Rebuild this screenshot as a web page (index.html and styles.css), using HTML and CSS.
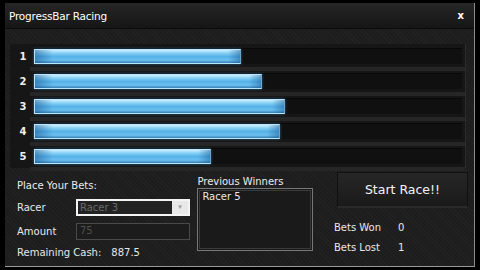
FILE: index.html
```html
<!DOCTYPE html>
<html lang="en">
<head>
    <meta charset="UTF-8">
    <title>ProgressBar Racing</title>
    <link rel="stylesheet" href="styles.css">
</head>
<body>
    <div class="window">
        <div class="titlebar">
            <span class="title">ProgressBar Racing</span>
            <span class="close">x</span>
        </div>

        <div class="content">
            <div class="race">
                <div class="lane"><span class="num">1</span><div class="track"><div class="bar" style="width: 48.4%"></div></div></div>
                <div class="lane"><span class="num">2</span><div class="track"><div class="bar" style="width: 53.3%"></div></div></div>
                <div class="lane"><span class="num">3</span><div class="track"><div class="bar" style="width: 58.6%"></div></div></div>
                <div class="lane"><span class="num">4</span><div class="track"><div class="bar" style="width: 57.5%"></div></div></div>
                <div class="lane"><span class="num">5</span><div class="track"><div class="bar" style="width: 41.4%"></div></div></div>
            </div>

            <div class="bottom">
                <div class="bets">
                    <div class="heading">Place Your Bets:</div>
                    <div class="field">
                        <span class="label">Racer</span>
                        <div class="combo"><span>Racer 3</span><span class="arrow">&#9662;</span></div>
                    </div>
                    <div class="field">
                        <span class="label">Amount</span>
                        <div class="textbox">75</div>
                    </div>
                    <div class="cash"><span>Remaining Cash:</span><span class="cash-val">887.5</span></div>
                </div>

                <div class="winners">
                    <div class="heading">Previous Winners</div>
                    <div class="listbox">Racer 5</div>
                </div>

                <div class="side">
                    <button class="start">Start Race!!</button>
                    <div class="stat"><span class="stat-label">Bets Won</span><span>0</span></div>
                    <div class="stat"><span class="stat-label">Bets Lost</span><span>1</span></div>
                </div>
            </div>
        </div>
    </div>
</body>
</html>
```

FILE: styles.css
```css
* {
    margin: 0;
    padding: 0;
    box-sizing: border-box;
}

body {
    background: #000;
    font-family: 'DejaVu Sans', 'Liberation Sans', sans-serif;
    color: #e8e8e8;
    font-size: 10px;
    width: 480px;
    height: 270px;
    overflow: hidden;
    padding: 3px 5px 3px 5px;
}

.window {
    height: 264px;
    background:
        repeating-linear-gradient(45deg, rgba(255,255,255,0.025) 0 1px, transparent 1px 3px),
        #1d1d1d;
    border-right: 1px solid #8a8a8a;
    border-bottom: 1px solid #9a9a9a;
    display: flex;
    flex-direction: column;
}

.titlebar {
    height: 26px;
    background: linear-gradient(#262626, #161616);
    border-bottom: 1px solid #0c0c0c;
    display: flex;
    justify-content: space-between;
    align-items: center;
    padding: 0 10px 0 4px;
}

.title {
    font-size: 10.5px;
    color: #fff;
    letter-spacing: -0.2px;
}

.close {
    font-size: 10px;
    font-weight: bold;
    color: #fff;
}

.content {
    padding: 15px 8px 0 5px;
}

.race {
    display: flex;
    flex-direction: column;
    gap: 9px;
    background: #161616;
    border-right: 1px solid #2c2c2c;
    padding: 4px 3px 4px 0;
}

.lane {
    display: flex;
    align-items: center;
    height: 16px;
    position: relative;
}

.lane::after {
    content: '';
    position: absolute;
    left: 20px;
    right: -3px;
    bottom: -7px;
    height: 4px;
    background: #262626;
}

.num {
    width: 20px;
    text-align: center;
    font-weight: bold;
    font-size: 10px;
    color: #f0f0f0;
    padding-left: 6px;
}

.track {
    flex: 1;
    height: 16px;
    margin-left: 4px;
    background: #101010;
    border-top: 1px solid #080808;
}

.bar {
    height: 100%;
    border: 1px solid #b8e6fc;
    border-right-color: #6fa6c8;
    background:
        linear-gradient(to right, rgba(20, 80, 140, 0.5) 0, rgba(20, 80, 140, 0) 18px, rgba(20, 80, 140, 0) calc(100% - 12px), rgba(20, 80, 140, 0.45) 100%),
        linear-gradient(#d0f0ff 0%, #8ad3f6 22%, #55b2e8 50%, #6cc0ef 78%, #3580b8 100%);
    box-shadow: 0 0 3px rgba(70, 160, 230, 0.5);
}

.bottom {
    display: flex;
    padding-top: 6px;
}

.bets {
    width: 185px;
    padding-left: 7px;
}

.heading {
    font-size: 10px;
    color: #ececec;
    height: 14px;
    padding-top: 2px;
}

.bets .heading {
    height: 21px;
    padding-top: 6px;
}

.field {
    display: flex;
    align-items: center;
    height: 24px;
}

.label {
    width: 59px;
}

.combo {
    width: 114px;
    height: 17px;
    border: 2px solid #f4f4f4;
    background: #222;
    color: #6a6a6a;
    display: flex;
    justify-content: space-between;
    align-items: center;
    padding-left: 2px;
}

.arrow {
    width: 16px;
    height: 100%;
    background: #e8e8e8;
    color: #999;
    font-size: 7px;
    text-align: center;
    line-height: 13px;
}

.textbox {
    width: 114px;
    height: 17px;
    border: 1px solid #4a4a4a;
    background: #1c1c1c;
    color: #505050;
    padding: 1px 3px;
}

.cash {
    display: flex;
    padding-top: 4px;
}

.cash-val {
    margin-left: 10px;
}

.winners {
    width: 118px;
    margin-left: 6px;
}

.listbox {
    height: 63px;
    border: 1px solid #777;
    outline: 1px solid #3a3a3a;
    outline-offset: -3px;
    background: #1a1a1a;
    padding: 2px 4px;
}

.side {
    margin-left: 21px;
    width: 132px;
}

.start {
    display: block;
    width: 131px;
    height: 36px;
    margin-left: 3px;
    margin-top: -2px;
    background: linear-gradient(#262626, #1a1a1a);
    border: 1px solid #101010;
    border-bottom: 2px solid #2a2a2a;
    color: #f4f4f4;
    font-family: 'DejaVu Sans', sans-serif;
    font-size: 12.5px;
}

.stat {
    display: flex;
    height: 20px;
    align-items: center;
}

.stat:first-of-type {
    margin-top: 9px;
}

.stat-label {
    width: 64px;
}
```
